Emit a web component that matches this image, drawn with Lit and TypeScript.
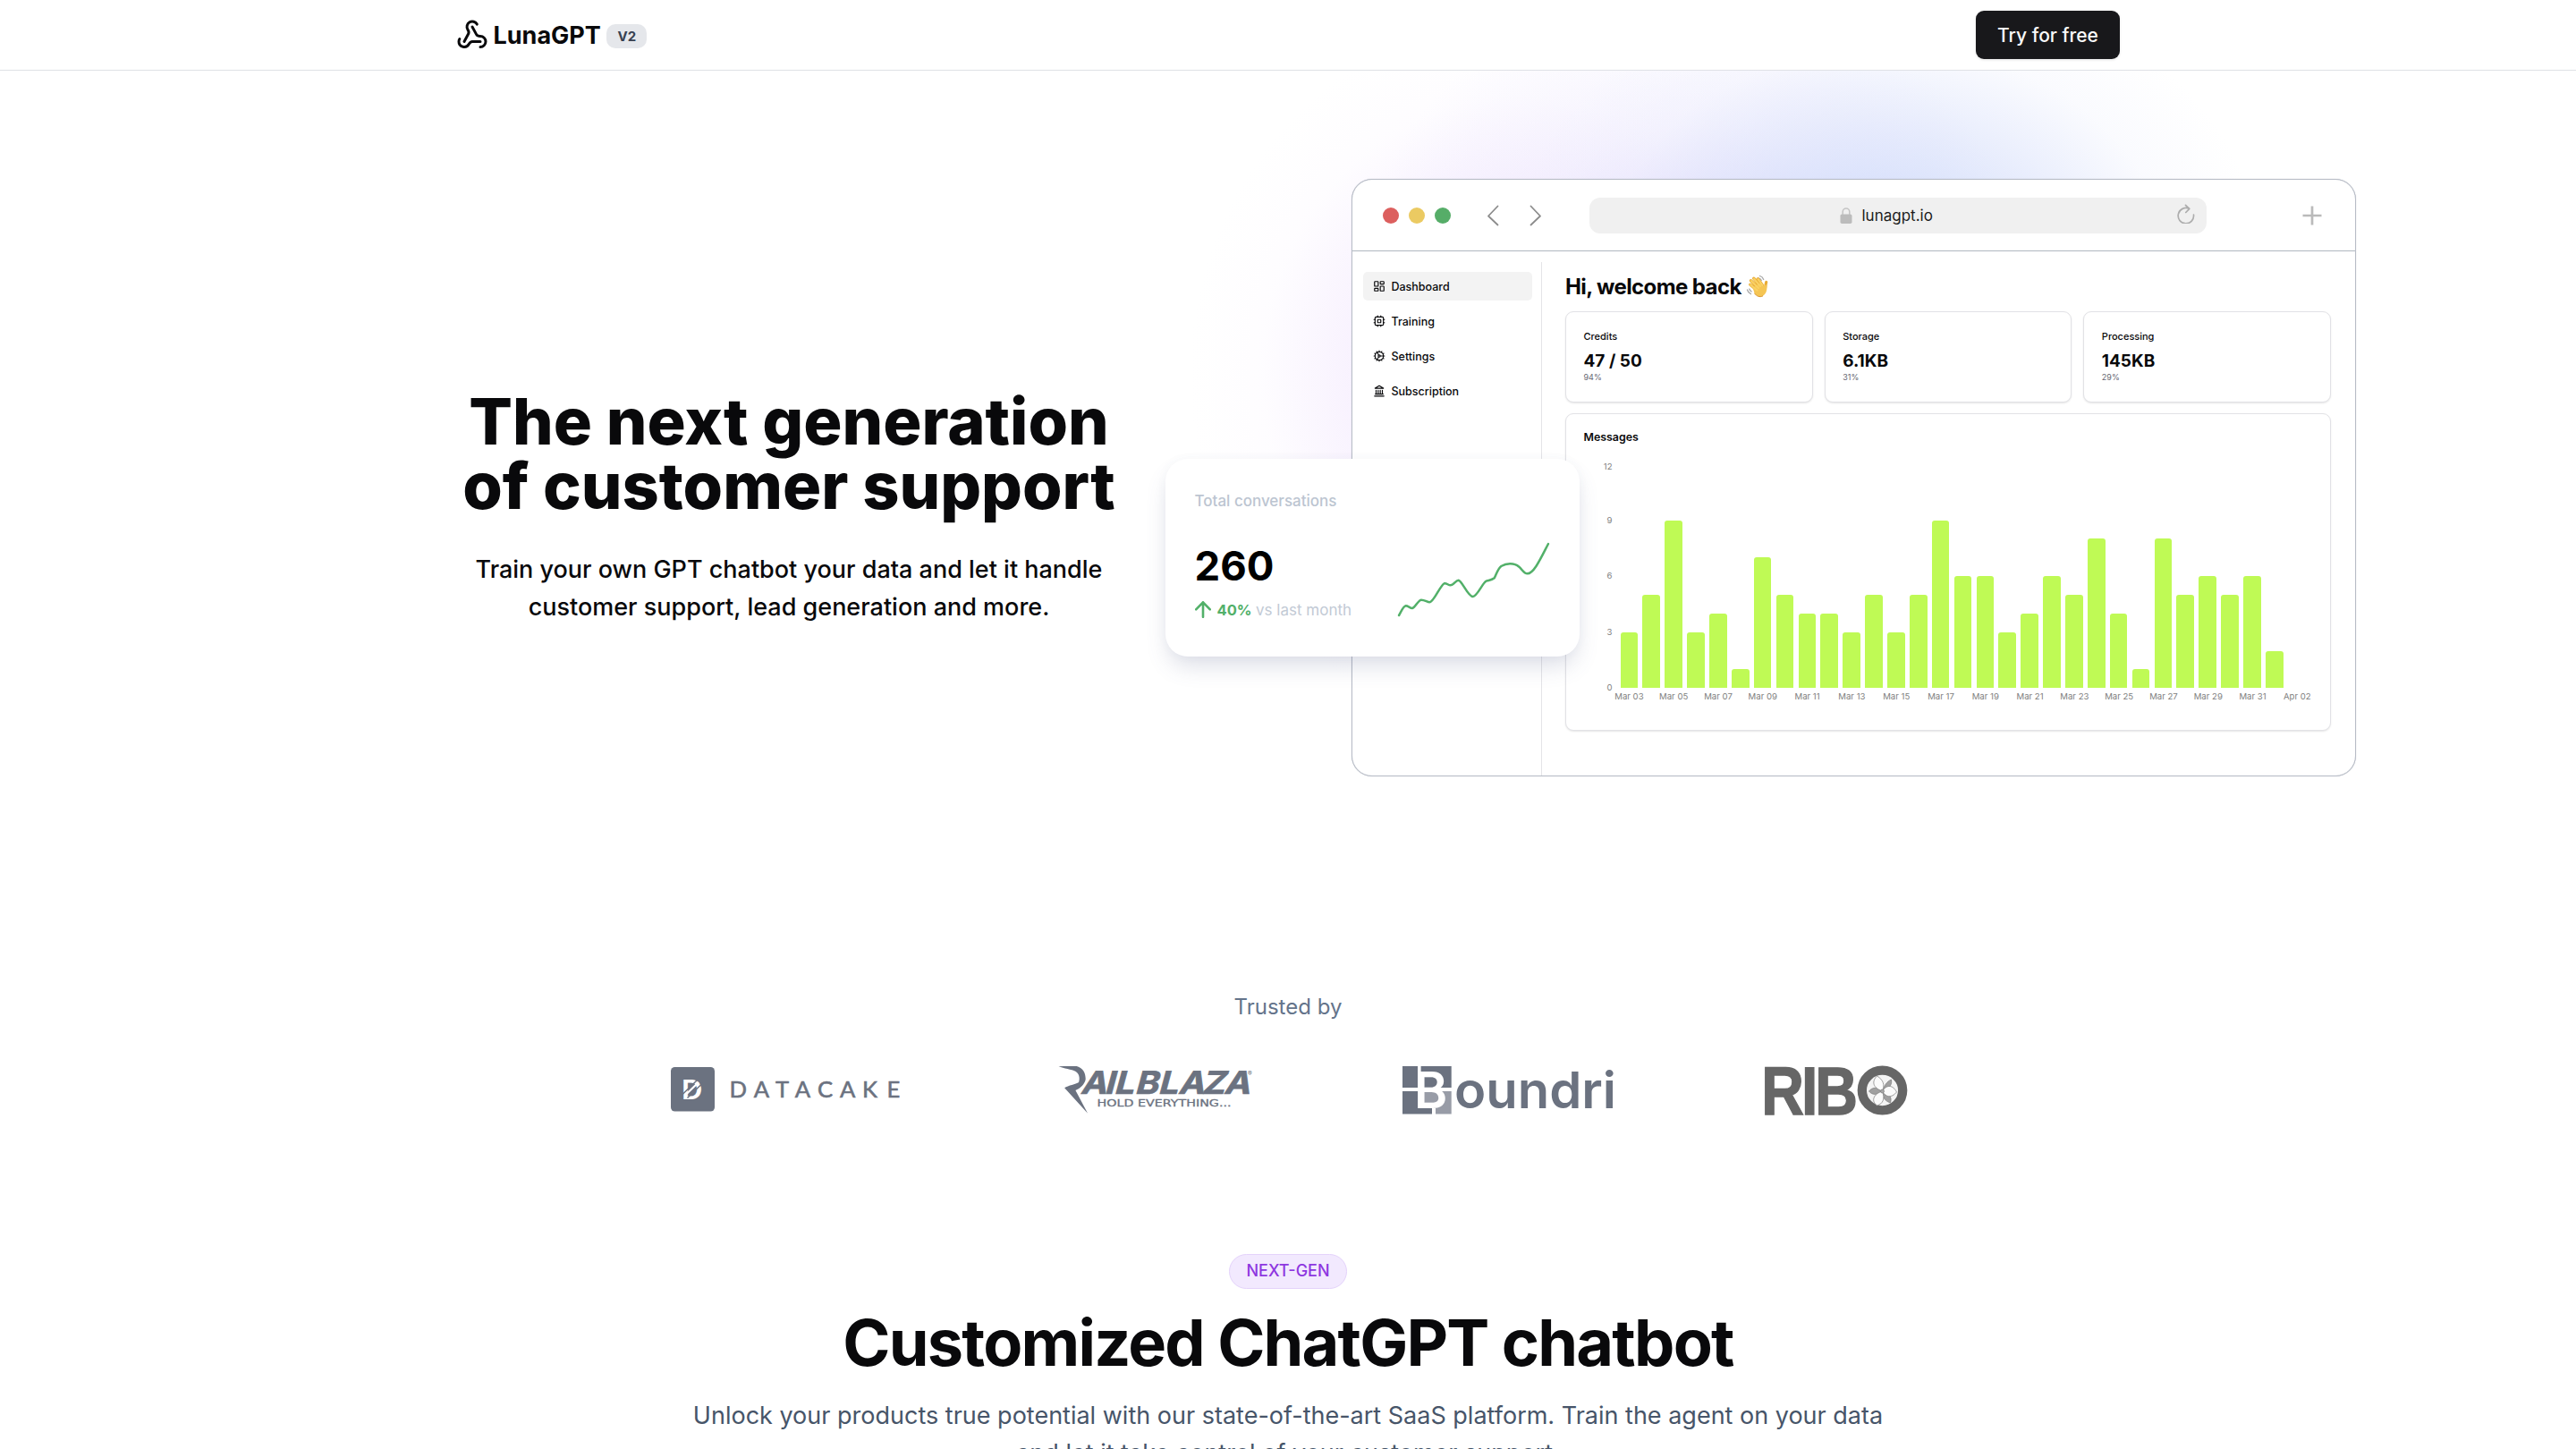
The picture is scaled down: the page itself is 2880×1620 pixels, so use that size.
import { LitElement, html, css, svg } from "lit";
import { customElement } from "lit/decorators.js";

const MESSAGES = [3, 5, 9, 3, 4, 1, 7, 5, 4, 4, 3, 5, 3, 5, 9, 6, 6, 3, 4, 6, 5, 8, 4, 1, 8, 5, 6, 5, 6, 2];
const DAYS = ["Mar 03", "Mar 05", "Mar 07", "Mar 09", "Mar 11", "Mar 13", "Mar 15", "Mar 17", "Mar 19", "Mar 21", "Mar 23", "Mar 25", "Mar 27", "Mar 29", "Mar 31", "Apr 02"];
const TICKS = [12, 9, 6, 3, 0];
const STATS = [
  { label: "Credits", value: "47 / 50", share: "94%" },
  { label: "Storage", value: "6.1KB", share: "31%" },
  { label: "Processing", value: "145KB", share: "29%" },
];
const NAV = [
  {
    label: "Dashboard",
    icon: svg`<rect x="3" y="3" width="7" height="9" rx="1"/><rect x="14" y="3" width="7" height="5" rx="1"/><rect x="14" y="12" width="7" height="9" rx="1"/><rect x="3" y="16" width="7" height="5" rx="1"/>`,
  },
  {
    label: "Training",
    icon: svg`<rect x="4" y="4" width="16" height="16" rx="2"/><rect x="9" y="9" width="6" height="6" rx="1"/><path d="M15 2v2M15 20v2M2 15h2M2 9h2M20 15h2M20 9h2M9 2v2M9 20v2"/>`,
  },
  {
    label: "Settings",
    icon: svg`<path d="M12 20a8 8 0 1 0 0-16 8 8 0 0 0 0 16ZM12 14a2 2 0 1 0 0-4 2 2 0 0 0 0 4ZM12 2v2M12 22v-2M17 20.66l-1-1.73M11 10.27 7 3.34M20.66 17l-1.73-1M3.34 7l1.73 1M14 12h8M2 12h2M20.66 7l-1.73 1M3.34 17l1.73-1M17 3.34l-1 1.73M11 13.73l-4 6.93"/>`,
  },
  {
    label: "Subscription",
    icon: svg`<path d="M3 22h18M6 18v-7M10 18v-7M14 18v-7M18 18v-7M4.500 18.200h15M12 2l8 5H4z"/>`,
  },
];

@customElement("app-header")
export class AppHeader extends LitElement {
  static styles = css`
    :host { display: block; position: relative; z-index: 2; }
    .bar {
      box-sizing: border-box; height: 79px; padding: 0 510px; border-bottom: 1px solid #dfe1e6;
      display: flex; align-items: center; justify-content: space-between; background: rgba(255, 255, 255, 0.95);
    }
    .brand { display: flex; align-items: center; color: #09090b; }
    .mark { width: 36px; height: 36px; display: block; }
    .name { font-size: 27px; line-height: 36px; font-weight: 700; margin: 1px 0 0 5.500px; }
    .ver {
      box-sizing: border-box; width: 45px; height: 27px; margin: 2px 0 0 6.500px; border-radius: 10px; background: #e5e7eb;
      color: #374151; font-size: 15px; line-height: 27px; font-weight: 700; text-align: center;
    }
    .cta {
      width: 161px; height: 54px; border-radius: 9px; background: #18181b; color: #fafafa; text-align: center;
      font-size: 21px; line-height: 55px; font-weight: 500; box-shadow: 0 1px 3px rgba(0, 0, 0, 0.12);
    }
  `;
  render() {
    return html`<header class="bar">
      <div class="brand">
        <svg class="mark" viewBox="0 0 24 24" fill="none" stroke="currentColor" stroke-width="2" stroke-linecap="round" stroke-linejoin="round">
          <path d="M18 16.980h-5.990c-1.100 0-1.950.940-2.480 1.900A4 4 0 0 1 2 17c.010-.700.200-1.400.570-2"/>
          <path d="m6 17 3.130-5.780c.530-.970.100-2.180-.500-3.100a4 4 0 1 1 6.890-4.060"/>
          <path d="m12 6 3.130 5.730C15.660 12.700 16.900 13 18 13a4 4 0 0 1 0 8"/>
        </svg>
        <span class="name">LunaGPT</span>
        <span class="ver">V2</span>
      </div>
      <div class="cta">Try for free</div>
    </header>`;
  }
}

@customElement("message-chart")
export class MessageChart extends LitElement {
  static styles = css`
    :host { display: block; }
    .chart { display: grid; grid-template-columns: 32px 1fr; color: #808080; font-size: 9.600px; }
    .ticks { height: 262.200px; margin: -6px 0; display: flex; flex-direction: column; justify-content: space-between; text-align: right; line-height: 12px; }
    .ticks span:first-child { position: relative; top: 3px; }
    .bars { height: 250.200px; margin-left: 9px; display: flex; align-items: flex-end; gap: 5.200px; }
    .bar { width: 19.700px; flex: none; background: #bffa55; border-radius: 3px 3px 0 0; }
    .days { grid-column: 2; display: flex; margin: 3px 0 0 -6px; line-height: 14px; }
    .day { width: 49.800px; flex: none; text-align: center; }
  `;
  render() {
    return html`<div class="chart">
      <div class="ticks">${TICKS.map((t) => html`<span>${t}</span>`)}</div>
      <div class="bars">${MESSAGES.map((v) => html`<div class="bar" style="height:${v * 20.85}px"></div>`)}</div>
      <div class="days">${DAYS.map((d) => html`<span class="day">${d}</span>`)}</div>
    </div>`;
  }
}

@customElement("browser-mock")
export class BrowserMock extends LitElement {
  static styles = css`
    :host { display: block; }
    .window {
      box-sizing: border-box; width: 1123px; height: 668px; border: 1px solid #b8bdc7; border-radius: 23px;
      background: #fff; box-shadow: 0 0 1px #a9afba; display: flex; flex-direction: column; overflow: hidden;
    }
    .chrome { height: 79px; flex: none; border-bottom: 1px solid #b0b7c0; display: flex; align-items: center; padding-left: 33.500px; }
    .dots { display: flex; gap: 11px; }
    .dot { width: 18px; height: 18px; border-radius: 50%; }
    .red { background: #dc5f5e; }
    .yellow { background: #ebca62; }
    .green { background: #56ad68; }
    .arrows { display: flex; gap: 34px; margin-left: 40.500px; }
    .arrows svg { width: 14px; height: 24px; }
    .url {
      box-sizing: border-box; width: 690px; height: 40px; margin-left: 52.500px; border-radius: 12px; background: #f0f0f0;
      display: flex; align-items: center; padding: 0 13px 0 280px; font-size: 17px; color: #1c1c1c;
    }
    .lock { width: 14px; height: 18px; margin-right: 11px; }
    .reload { width: 20px; height: 22px; margin: -4px 0 0 auto; }
    .plus { width: 22px; height: 22px; margin-left: 107px; }
    .body { flex: 1; display: grid; grid-template-columns: 212px minmax(0, 1fr); }
    .side { box-sizing: border-box; margin-top: 12px; border-right: 1px solid #e4e4e7; padding: 11px 10px 0 12px; display: flex; flex-direction: column; gap: 7px; }
    .item { height: 32px; border-radius: 5px; display: flex; align-items: center; gap: 7px; padding-left: 10.500px; font-size: 12.500px; font-weight: 500; color: #09090b; }
    .item.on { background: #f3f3f3; }
    .item svg { width: 14px; height: 14px; }
    .main { padding: 23px 27px 0 26px; }
    .hello { height: 32px; display: flex; align-items: center; gap: 5px; font-size: 24px; font-weight: 700; color: #09090b; letter-spacing: -0.600px; }
    .hello svg { width: 26px; height: 26px; }
    .stats { display: grid; grid-template-columns: repeat(3, 1fr); gap: 13px; margin-top: 12px; }
    .card { box-sizing: border-box; border: 1px solid #e2e2e6; border-radius: 9px; box-shadow: 0 1px 2px rgba(0, 0, 0, 0.1); background: #fff; }
    .stat { height: 102px; padding: 18px 20px 0 19.500px; display: flex; flex-direction: column; }
    .label { font-size: 11px; line-height: 18px; font-weight: 500; color: #09090b; }
    .value { font-size: 19px; line-height: 28px; margin-top: 5px; font-weight: 700; color: #09090b; }
    .share { font-size: 9px; line-height: 12px; color: #666671; margin-top: -2px; }
    .messages { height: 355px; margin-top: 12px; padding: 16px 20px 0 19.500px; }
    .title { font-size: 12.400px; line-height: 20px; font-weight: 600; color: #09090b; margin-bottom: 20px; }
  `;
  render() {
    return html`<div class="window">
      <div class="chrome">
        <div class="dots"><div class="dot red"></div><div class="dot yellow"></div><div class="dot green"></div></div>
        <div class="arrows">
          <svg viewBox="0 0 14 24" fill="none" stroke="#8c8c8c" stroke-width="1.800" stroke-linecap="round" stroke-linejoin="round"><path d="M12.500 1.500 2 12.500l10.500 10"/></svg>
          <svg viewBox="0 0 14 24" fill="none" stroke="#8c8c8c" stroke-width="1.800" stroke-linecap="round" stroke-linejoin="round"><path d="M1.500 1.500 12 12.500 1.500 22.500"/></svg>
        </div>
        <div class="url">
          <svg class="lock" viewBox="0 0 14 18"><rect x=".5" y="7.500" width="13" height="10.500" rx="1.800" fill="#bcbcbc"/><path d="M3.200 8V4.800a3.800 3.800 0 0 1 7.600 0V8" fill="none" stroke="#c4c4c4" stroke-width="1.500"/></svg>
          <span>lunagpt.io</span>
          <svg class="reload" viewBox="0 0 20 22" fill="none" stroke="#adadad" stroke-width="1.700" stroke-linecap="round" stroke-linejoin="round"><path d="M18.500 12A8.700 8.700 0 1 1 13.500 5.300M9.500 1.300l4.300 4-4 4.200"/></svg>
        </div>
        <svg class="plus" viewBox="0 0 22 22" fill="none" stroke="#bababa" stroke-width="2.700"><path d="M11 .5v21M.5 11h21"/></svg>
      </div>
      <div class="body">
        <nav class="side">
          ${NAV.map((n, i) => html`<div class="item ${i === 0 ? "on" : ""}">
            <svg viewBox="0 0 24 24" fill="none" stroke="currentColor" stroke-width="2" stroke-linecap="round" stroke-linejoin="round">${n.icon}</svg><span>${n.label}</span>
          </div>`)}
        </nav>
        <div class="main">
          <div class="hello"><span>Hi, welcome back</span>
            <svg viewBox="0 0 26 26">
              <g fill="none" stroke="#a9a9a9" stroke-width="1.300" stroke-linecap="round"><path d="M15.500 1.500c2 .6 3.500 2 4.200 4M14.500 4c1.300.4 2.300 1.300 2.800 2.500M1.500 17c.5 2 2 3.800 4 4.700M3.800 16c.4 1.300 1.200 2.300 2.400 3"/></g>
              <g fill="none" stroke="#e9ac35" stroke-width="3.400" stroke-linecap="round"><path d="M14 15 5.500 6.800M16 13 8.700 4.200M18.500 12 13.300 4.800M12.500 17.500 4.800 11.200"/><path d="M21.500 15c.6-2.500.6-5 1.200-6.500" stroke-width="3.200"/></g>
              <path d="M7.500 14.500 16 9.500l4 3.500 3-2c1.300 5.500-.3 10.500-4 12.800-3.700 2-7.500.2-9.500-3z" fill="#f5c553"/>
              <g fill="none" stroke="#fad264" stroke-width="2.100" stroke-linecap="round"><path d="M14 15 5.800 7M16 13 9 4.700M18.500 12 13.500 5.200M12.500 17.500 5 11.400"/></g>
              <path d="M9.500 20.800c2 3.200 5.800 5 9.500 3" fill="none" stroke="#d8932b" stroke-width="1"/>
            </svg>
          </div>
          <div class="stats">
            ${STATS.map((s) => html`<div class="card stat"><span class="label">${s.label}</span><span class="value">${s.value}</span><span class="share">${s.share}</span></div>`)}
          </div>
          <div class="card messages">
            <div class="title">Messages</div>
            <message-chart></message-chart>
          </div>
        </div>
      </div>
    </div>`;
  }
}

@customElement("conversation-card")
export class ConversationCard extends LitElement {
  static styles = css`
    :host { display: block; }
    .card {
      box-sizing: border-box; width: 463px; height: 221px; border-radius: 25px; background: #fff; padding: 34.500px 33px 0 32.500px;
      box-shadow: 0 14px 26px -4px rgba(80, 92, 135, 0.2), 0 0 12px rgba(80, 92, 135, 0.04);
      display: grid; grid-template-columns: 228px 1fr;
    }
    .title { font-size: 17px; line-height: 26px; font-weight: 500; color: #bcc5d1; }
    .total { font-size: 45.500px; line-height: 54px; font-weight: 700; color: #000; margin-top: 32.500px; }
    .delta { display: flex; align-items: center; margin-top: 9px; font-size: 17px; line-height: 26px; color: #c2cad5; }
    .delta svg { width: 18px; height: 19px; margin-right: 7px; }
    .pct { color: #52b069; font-size: 16.500px; font-weight: 700; margin-right: 4.500px; }
    .spark { width: 170px; height: 84px; margin-top: 59px; margin-left: -1px; overflow: visible; }
  `;
  render() {
    return html`<div class="card">
      <div>
        <div class="title">Total conversations</div>
        <div class="total">260</div>
        <div class="delta">
          <svg viewBox="0 0 18 19" fill="none" stroke="#52b069" stroke-width="2.600" stroke-linecap="round" stroke-linejoin="round"><path d="M9 17.800V1.300M1.200 9.300 9 1.300l7.800 8"/></svg>
          <span class="pct">40%</span><span>vs last month</span>
        </div>
      </div>
      <svg class="spark" viewBox="790 346 510 252" fill="none" stroke="#52b069" stroke-width="7.500" stroke-linecap="round">
        <path d="M793 592C800 580 808 561 816 560 824 560 830 568 838 568 848 566 858 540 868 540 880 540 888 548 896 548 910 548 932 490 945 485 953 483 958 491 966 491 976 491 984 474 993 474 1005 476 1024 528 1041 529 1056 528 1074 482 1086 477 1096 474 1104 474 1113 467 1120 455 1124 436 1136 427 1152 418 1178 414 1196 429 1208 440 1212 452 1224 452 1246 452 1270 398 1294 352"/>
      </svg>
    </div>`;
  }
}

@customElement("trusted-logos")
export class TrustedLogos extends LitElement {
  static styles = css`
    :host { display: block; }
    .row { display: grid; grid-template-columns: 434px 384px 406px 160px; justify-content: center; margin-left: 3px; }
    svg { display: block; height: 55px; overflow: visible; }
    .caps { font-family: Lato, sans-serif; font-size: 25.600px; font-weight: 400; }
    .dmark { font-family: Lato, sans-serif; font-size: 30px; font-weight: 900; }
    .rail { font-family: Inter, sans-serif; font-size: 35.300px; font-weight: 700; }
    .tag { font-family: "DejaVu Sans", sans-serif; font-size: 11px; }
    .reg { font-family: Inter, sans-serif; font-size: 7px; }
    .bound { font-family: Inter, sans-serif; font-size: 56.500px; font-weight: 600; }
    .ribo { font-family: "Liberation Sans", Arial, sans-serif; font-size: 76px; font-weight: 700; }
  `;
  render() {
    return html`<div class="row">
      <svg width="257" viewBox="0 0 257 55" fill="#6b7280">
        <rect x="0" y="1" width="49" height="49.500" rx="4.500"/>
        <text class="dmark" x="12" y="36.700" fill="#fff">D</text>
        <path d="M12 32.500 29 16M18.500 35.500 35.500 19" stroke="#6b7280" stroke-width="1.500" fill="none"/>
        <path d="M15.500 33 31 18" stroke="#fff" stroke-width="2.200" fill="none"/>
        <text class="caps" stroke="#6b7280" stroke-width=".6" x="65.500 92.700 117 138.700 164 189 214 241.500" y="35">DATACAKE</text>
      </svg>
      <svg width="216" viewBox="0 0 216 55" fill="#6b7280">
        <path transform="translate(-9.500 -12) scale(.3325)" d="M27 37 45 36H88C110 42 118 60 118 80 116 95 100 112 84 117L125 195 47 109C60 100 85 97 95 90 100 75 95 60 85 54 70 47 45 44 27 37Z"/>
        <text class="rail" transform="translate(0 30.700) skewX(-15) scale(1.120 1)" stroke="#6b7280" stroke-width=".7" x="21 44.800 54.500 75.300 98.500 118.500 142 164" y="0">AILBLAZA</text>
        <text class="tag" x="42.500" y="45" textLength="150" lengthAdjust="spacingAndGlyphs" stroke="#6b7280" stroke-width=".3">HOLD EVERYTHING...</text>
        <text class="reg" x="211" y="10.500">®</text>
      </svg>
      <svg width="238" viewBox="0 0 238 55" fill="#6b7280">
        <path d="M0 0h17v24H0zM20.600 0h34.100v24H20.600zM0 28h24v19h9v6.500H0z"/>
        <path d="M24 28h30.700v25.500H37V47H24z" fill="#989ca7"/>
        <text class="bound" x="13" y="47" fill="#fff">B</text>
        <text class="bound" x="58" y="47" textLength="181" lengthAdjust="spacingAndGlyphs">oundri</text>
      </svg>
      <svg width="160" viewBox="0 0 160 55" fill="#666">
        <text class="ribo" transform="translate(0 53.500) scale(.87 1)" stroke="#666" stroke-width="1.300" x="-5.400 46 63.500" y="0">RIB</text>
        <ellipse cx="130.500" cy="27" rx="22.700" ry="22.300" fill="#f4f4f4" stroke="#666" stroke-width="10.300"/>
        <g transform="translate(130.500 28)" stroke="#7a7a7a" stroke-width=".7">
          <path d="M0 0C2-6 5-11 10-13 11-8 9-4 0 0ZM0 0C-5-5-11-5-15 0-11 5-5 4 0 0ZM0 0C8 2 11 7 9 13 3 11 0 7 0 0Z" fill="#a0a0a0"/>
          <path d="M0 0C-11-4-12-11-6-17 1-13 3-7 0 0ZM0 0C5-8 12-7 16 1 10 8 4 7 0 0ZM0 0C3 8 1 14-6 16-13 11-10 3 0 0Z" fill="#fbfbfb"/>
          <circle r="2" fill="#aaa"/>
        </g>
      </svg>
    </div>`;
  }
}

@customElement("app-root")
export class AppRoot extends LitElement {
  static styles = css`
    :host { display: block; width: 100%; height: 1620px; overflow: hidden; position: relative; background: #fff; font-family: Inter, sans-serif; }
    .hero { position: relative; box-sizing: border-box; height: 1028px; padding-left: 510px; display: flex; align-items: flex-start; }
    .glow { position: absolute; inset: -79px 0 0 0; background:
      radial-gradient(ellipse 420px 330px at 2110px 300px, rgba(190, 208, 250, 0.78), rgba(207, 217, 250, 0.5) 45%, rgba(230, 234, 252, 0.2) 75%, rgba(255, 255, 255, 0) 100%),
      radial-gradient(ellipse 360px 300px at 1890px 290px, rgba(222, 216, 251, 0.7), rgba(234, 230, 253, 0.4) 50%, rgba(255, 255, 255, 0) 100%),
      radial-gradient(ellipse 370px 400px at 1700px 420px, rgba(232, 214, 252, 0.75), rgba(243, 232, 254, 0.58) 50%, rgba(250, 244, 255, 0.22) 78%, rgba(255, 255, 255, 0) 100%); }
    .copy { position: relative; width: 744px; margin-top: 356px; text-align: center; color: #09090b; }
    h1 { margin: 0; font-size: 72px; line-height: 72px; font-weight: 800; }
    .lead { margin: 37px 0 0; font-size: 27px; line-height: 42px; font-weight: 500; }
    .shot { position: relative; margin: 121px 0 0 257px; }
    .float { position: absolute; left: -208px; top: 312.500px; }
    .trusted { text-align: center; font-size: 24px; line-height: 36px; color: #64748b; padding-top: 1px; margin-bottom: 48px; }
    .next { display: flex; flex-direction: column; align-items: center; margin-top: 155px; }
    .pill { box-sizing: border-box; width: 132px; height: 39px; border: 1px solid #e4d3fb; border-radius: 20px; background: #f2e9fe; color: #8e37e0; font-size: 18px; line-height: 36px; font-weight: 500; text-align: center; }
    h2 { margin: 24px 0 0; font-size: 72px; line-height: 72px; font-weight: 700; letter-spacing: -0.025em; color: #09090b; white-space: nowrap; }
    .sub { margin: 25px 0 0; font-size: 27px; line-height: 42px; color: #475569; text-align: center; }
  `;
  render() {
    return html`
      <app-header></app-header>
      <section class="hero">
        <div class="glow"></div>
        <div class="copy">
          <h1>The next generation<br />of customer support</h1>
          <p class="lead">Train your own GPT chatbot your data and let it handle<br />customer support, lead generation and more.</p>
        </div>
        <div class="shot">
          <browser-mock></browser-mock>
          <conversation-card class="float"></conversation-card>
        </div>
      </section>
      <div class="trusted">Trusted by</div>
      <trusted-logos></trusted-logos>
      <section class="next">
        <div class="pill">NEXT-GEN</div>
        <h2>Customized ChatGPT chatbot</h2>
        <p class="sub">Unlock your products true potential with our state-of-the-art SaaS platform. Train the agent on your data<br />and let it take control of your customer support.</p>
      </section>
    `;
  }
}
